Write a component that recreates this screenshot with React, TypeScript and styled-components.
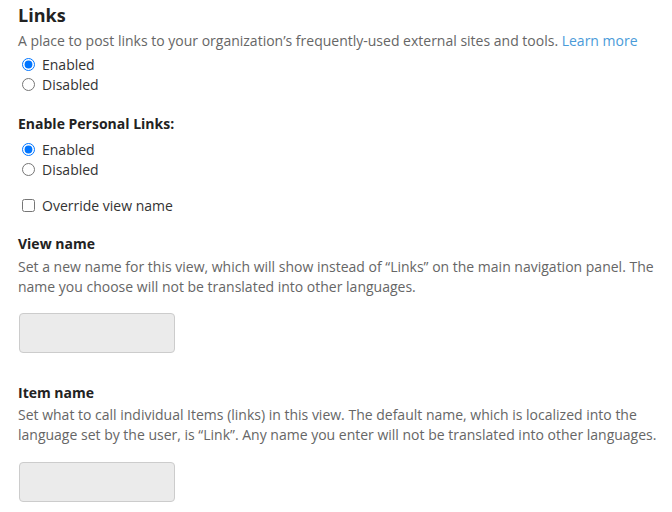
import React, { useState } from "react";
import styled, { createGlobalStyle } from "styled-components";

const GlobalStyle = createGlobalStyle`
  body {
    margin: 0;
    background: #ffffff;
    font-family: "Open Sans", "Noto Sans", sans-serif;
  }
`;

const Page = styled.div`
  padding: 3px 8px 0 18px;
  color: #333333;
  font-size: 14px;
`;

const Title = styled.h2`
  margin: 0 0 4px 0;
  font-size: 18px;
  line-height: 24px;
  font-weight: 700;
  color: #222222;
`;

const Description = styled.p<{ $gap?: number }>`
  margin: 0 0 ${(p) => p.$gap ?? 0}px 0;
  font-size: 14px;
  line-height: 20px;
  color: #666666;
`;

const LearnMore = styled.a`
  color: #4a9bd9;
  text-decoration: none;
`;

const Group = styled.div<{ $gap: number }>`
  display: flex;
  flex-direction: column;
  margin-bottom: ${(p) => p.$gap}px;
`;

const OptionRow = styled.label`
  display: flex;
  align-items: center;
  height: 20px;
  font-size: 14px;
  color: #333333;
  input {
    margin: 0 7px 0 4px;
    width: 13px;
    height: 13px;
  }
`;

const SubHeading = styled.div<{ $gap?: number; $top?: number }>`
  font-size: 14px;
  line-height: 20px;
  font-weight: 700;
  color: #222222;
  margin-top: ${(p) => p.$top ?? 0}px;
  margin-bottom: ${(p) => p.$gap ?? 0}px;
`;

const NameInput = styled.input`
  display: block;
  box-sizing: border-box;
  width: 156px;
  height: 40px;
  margin: 0 0 0 1px;
  background: #ebebeb;
  border: 1px solid #cccccc;
  border-radius: 4px;
`;

const RadioPair = ({ name, gap }: { name: string; gap: number }) => {
  const [value, setValue] = useState("enabled");
  return (
    <Group $gap={gap}>
      <OptionRow>
        <input
          type="radio"
          name={name}
          checked={value === "enabled"}
          onChange={() => setValue("enabled")}
        />
        Enabled
      </OptionRow>
      <OptionRow>
        <input
          type="radio"
          name={name}
          checked={value === "disabled"}
          onChange={() => setValue("disabled")}
        />
        Disabled
      </OptionRow>
    </Group>
  );
};

const App = () => {
  return (
    <Page>
      <GlobalStyle />
      <Title>Links</Title>
      <Description $gap={3}>
        A place to post links to your organization’s frequently-used external
        sites and tools. <LearnMore href="#">Learn more</LearnMore>
      </Description>
      <RadioPair name="links" gap={20} />

      <SubHeading $gap={5}>Enable Personal Links:</SubHeading>
      <RadioPair name="personal" gap={16} />

      <Group $gap={19}>
        <OptionRow>
          <input type="checkbox" />
          Override view name
        </OptionRow>
      </Group>

      <SubHeading $gap={3}>View name</SubHeading>
      <Description $gap={16}>
        Set a new name for this view, which will show instead of “Links” on the
        main navigation panel. The name you choose will not be translated into
        other languages.
      </Description>
      <NameInput disabled />

      <SubHeading $top={30} $gap={2}>
        Item name
      </SubHeading>
      <Description $gap={17}>
        Set what to call individual Items (links) in this view. The default
        name, which is localized into the language set by the user, is “Link”.
        Any name you enter will not be translated into other languages.
      </Description>
      <NameInput disabled />
    </Page>
  );
};

export default App;
